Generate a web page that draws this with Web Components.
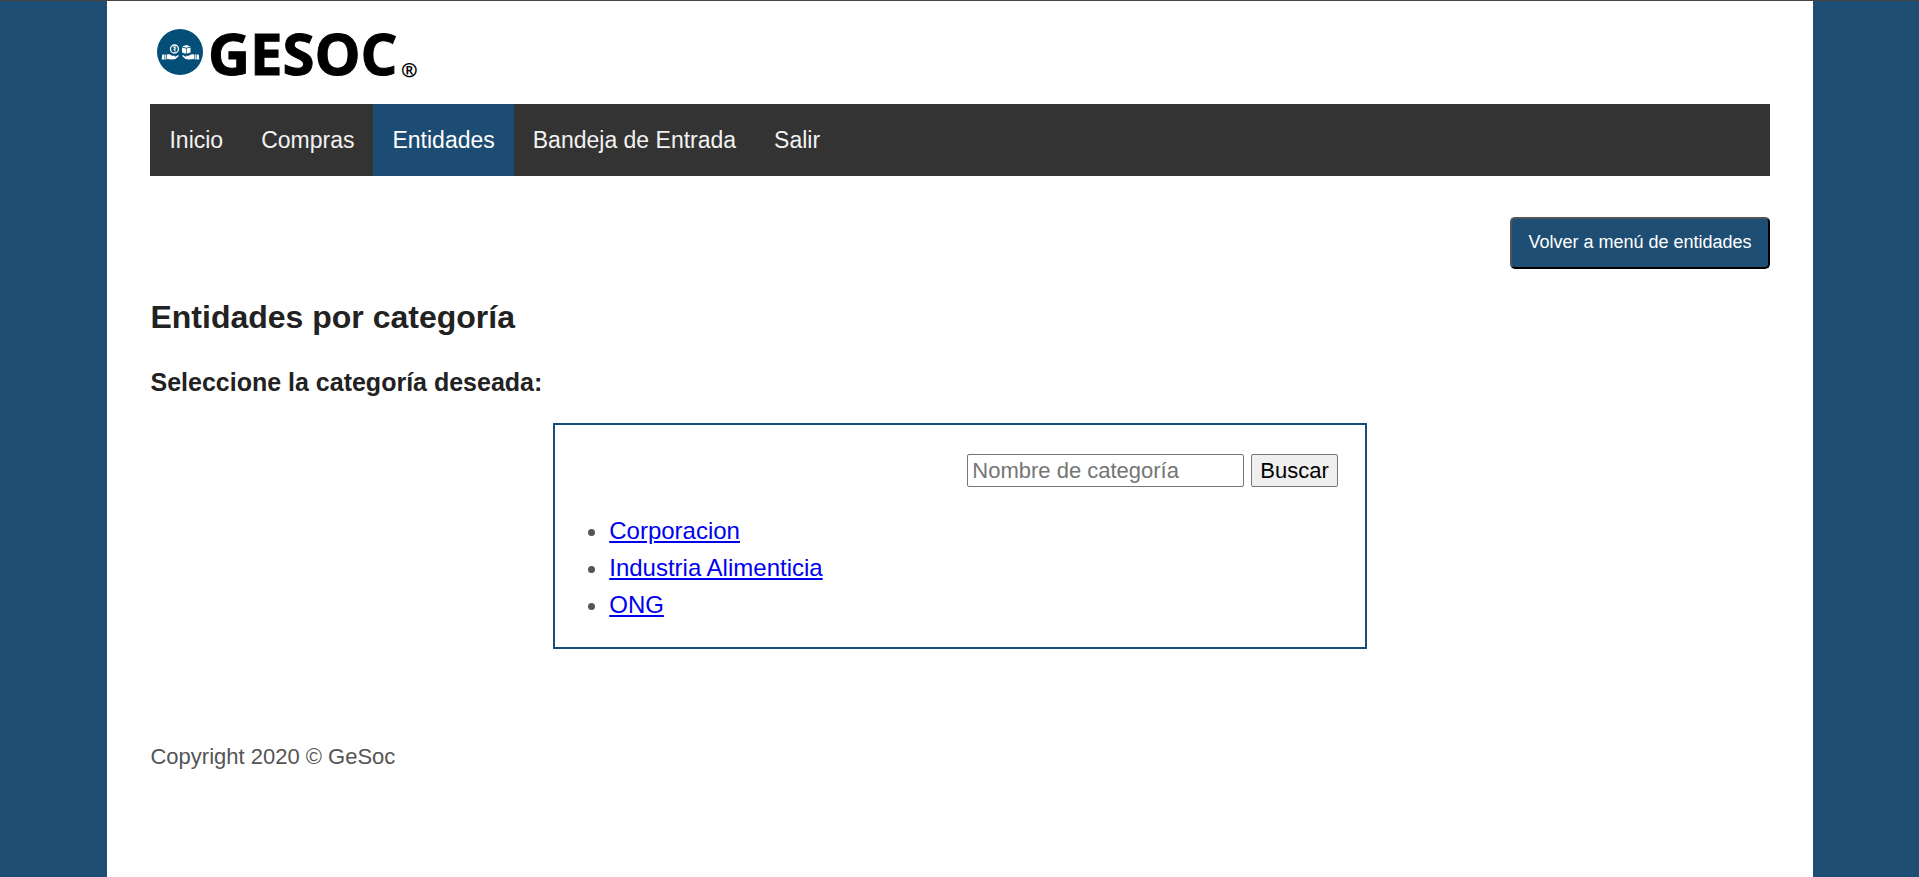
<!DOCTYPE html>
<html lang="es">
<head>
<meta charset="utf-8">
<title>GeSoc - Entidades por categoría</title>
<style>
  html { background: #1e4e73; }
  body { margin: 0; font-family: "Liberation Sans", Arial, sans-serif; color: #555; }
</style>
</head>
<body>
<gesoc-page>
  <gesoc-logo slot="header"></gesoc-logo>
  <gesoc-nav slot="header">
    <gesoc-nav-item href="#inicio">Inicio</gesoc-nav-item>
    <gesoc-nav-item href="#compras">Compras</gesoc-nav-item>
    <gesoc-nav-item href="#entidades" active>Entidades</gesoc-nav-item>
    <gesoc-nav-item href="#bandeja">Bandeja de Entrada</gesoc-nav-item>
    <gesoc-nav-item href="#salir">Salir</gesoc-nav-item>
  </gesoc-nav>
  <gesoc-back-button>Volver a menú de entidades</gesoc-back-button>
  <gesoc-title level="2">Entidades por categoría</gesoc-title>
  <gesoc-title level="3">Seleccione la categoría deseada:</gesoc-title>
  <gesoc-category-box></gesoc-category-box>
  <gesoc-footer slot="footer">Copyright 2020 © GeSoc</gesoc-footer>
</gesoc-page>

<script>
  class Base extends HTMLElement {
    connectedCallback() {
      if (this.shadowRoot) return;
      this.attachShadow({ mode: 'open' }).innerHTML = this.view();
    }
  }

  customElements.define('gesoc-page', class extends Base {
    view() {
      return `<style>
        :host { display: flex; justify-content: center; box-sizing: border-box; min-height: 100vh; padding-left: 1px; border-top: 1px solid #444; }
        .panel { box-sizing: border-box; width: 88.9%; padding: 5px 43px 23px; background: #fff; }
        main { display: flex; flex-direction: column; padding-top: 41px; }
      </style>
      <div class="panel">
        <header><slot name="header"></slot></header>
        <main><slot></slot></main>
        <footer><slot name="footer"></slot></footer>
      </div>`;
    }
  });

  customElements.define('gesoc-logo', class extends Base {
    view() {
      return `<style>
        :host { display: block; padding-bottom: 10px; }
        svg { display: block; }
        text { stroke: #000; }
        .name { font: bold 58px "Open Sans", "Noto Sans", sans-serif; stroke-width: 1px; }
        .mark { font: bold 20px "Open Sans", "Noto Sans", sans-serif; stroke-width: 0; }
      </style>
      <svg width="280" height="88" viewBox="0 -18 280 88" role="img" aria-label="GESOC">
        <circle cx="30" cy="28" r="23" fill="#034f78"/>
        <g fill="#fff">
          <circle cx="24.500" cy="25" r="4" fill="none" stroke="#fff" stroke-width="1.300"/>
          <path d="M23 22.600h3.200v1h-1v1h1v1h-1.600l1.600 2h-1.200l-2-2.400h1.200v-1.600H23z"/>
          <path d="M32 22.500l4.300-1.500 4.200 1.500-4.200 1.200z"/>
          <path d="M32 23.400l3.900 1v5.300L32 28.500zM40.500 23.400l-3.900 1v5.300l3.900-1.200z"/>
          <path d="M12.300 30.500h2.200v5h-2.800zM15.200 30.500h1.200v5h-1.200z"/>
          <path d="M17 30.600c2.600-.9 4 .2 5 1.100h2.600c1 0 1 1.300 0 1.300H22h3.200l2.400-1.700c1-.4 1.500.5.8 1.100l-3 2.600c-2.600.8-5.400.4-8.400 0z"/>
          <path d="M48.700 30.500h-2.200v5h2.800zM45.800 30.500h-1.200v5h1.200z"/>
          <path d="M44 30.600c-2.600-.9-4 .2-5 1.100h-2.600c-1 0-1 1.300 0 1.300H39h-3.200l-2.400-1.700c-1-.4-1.500.5-.8 1.100l3 2.600c2.600.8 5.400.4 8.400 0z"/>
        </g>
        <text class="name" x="58" y="51">GESOC</text>
        <text class="mark" x="251" y="53">®</text>
      </svg>`;
    }
  });

  customElements.define('gesoc-nav', class extends Base {
    view() {
      return `<style>
        :host { display: block; background: #333; }
        nav { display: flex; }
      </style><nav><slot></slot></nav>`;
    }
  });

  customElements.define('gesoc-nav-item', class extends Base {
    view() {
      return `<style>
        :host { display: block; }
        a { display: block; padding: 0 19px; font-size: 23px; line-height: 72px; color: #f2f2f2; text-decoration: none; }
        :host([active]) a { background: #1c4b73; color: #fff; }
      </style><a href="${this.getAttribute('href')}"><slot></slot></a>`;
    }
  });

  customElements.define('gesoc-back-button', class extends Base {
    view() {
      return `<style>
        :host { display: block; align-self: flex-end; }
        button { display: block; padding: 13px 16px 15px; border: 2px outset #000; border-radius: 5px; background: #1e4e73;
          color: #fff; font: 18px/20px "Liberation Sans", Arial, sans-serif; }
      </style><button type="button"><slot></slot></button>`;
    }
  });

  customElements.define('gesoc-title', class extends Base {
    view() {
      const n = this.getAttribute('level');
      return `<style>
        :host { display: block; color: #222; }
        h2, h3 { margin: 0; font-weight: bold; }
        h2 { padding-top: 28px; font-size: 32px; line-height: 40px; }
        h3 { padding: 29px 0 25px; font-size: 25px; line-height: 32px; }
      </style><h${n}><slot></slot></h${n}>`;
    }
  });

  customElements.define('gesoc-category-box', class extends Base {
    view() {
      return `<style>
        :host { display: block; box-sizing: border-box; width: calc(50% + 4px); align-self: center; border: 2px solid #1c4b73; padding: 29px 27px 24px; }
        form { display: flex; justify-content: flex-end; gap: 7px; }
        input, button { box-sizing: border-box; height: 33px; margin: 0; border: 1px solid #767676; border-radius: 2px;
          font: 22px "Liberation Sans", Arial, sans-serif; color: #000; }
        input { width: 277px; padding: 1px 4px; background: #fff; }
        input::placeholder { color: #757575; }
        button { padding: 0 8px; background: #efefef; }
        ul { margin: 0; padding: 25px 0 0 27px; font-size: 24px; line-height: 37px; }
        a { color: #00e; }
      </style>
      <form>
        <input type="text" name="categoria" aria-label="Nombre de categoría" placeholder="Nombre de categoría">
        <button type="button">Buscar</button>
      </form>
      <ul>
        <li><a href="#corporacion">Corporacion</a></li>
        <li><a href="#industria">Industria Alimenticia</a></li>
        <li><a href="#ong">ONG</a></li>
      </ul>`;
    }
  });

  customElements.define('gesoc-footer', class extends Base {
    view() {
      return `<style>
        :host { display: block; padding: 90px 0 24px; font-size: 22px; line-height: 36px; }
      </style><slot></slot>`;
    }
  });
</script>
</body>
</html>
